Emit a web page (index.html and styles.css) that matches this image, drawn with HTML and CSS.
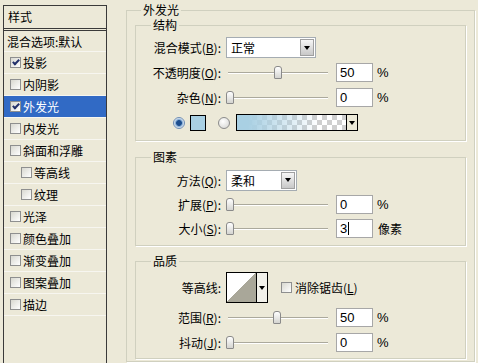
FILE: index.html
```html
<!DOCTYPE html>
<html>
<head>
  <meta charset="utf-8">
  <link rel="stylesheet" href="styles.css">
</head>
<body>

<div class="dialog">
  <!-- список стилей слева -->
  <div class="style-list">
    <div class="list-head">样式</div>
    <div class="list-row blend">混合选项:默认</div>
    <div class="list-row"><span class="check on"></span>投影</div>
    <div class="list-row"><span class="check"></span>内阴影</div>
    <div class="list-row selected"><span class="check on"></span>外发光</div>
    <div class="list-row"><span class="check"></span>内发光</div>
    <div class="list-row"><span class="check"></span>斜面和浮雕</div>
    <div class="list-row sub"><span class="check"></span>等高线</div>
    <div class="list-row sub"><span class="check"></span>纹理</div>
    <div class="list-row"><span class="check"></span>光泽</div>
    <div class="list-row"><span class="check"></span>颜色叠加</div>
    <div class="list-row"><span class="check"></span>渐变叠加</div>
    <div class="list-row"><span class="check"></span>图案叠加</div>
    <div class="list-row"><span class="check"></span>描边</div>
  </div>

  <!-- настройки внешнего свечения -->
  <fieldset class="group outer">
    <legend>外发光</legend>

    <fieldset class="group inner structure">
      <legend>结构</legend>
      <div class="row">
        <span class="lbl">混合模式(<u>B</u>):</span>
        <div class="select mode"><span>正常</span><i class="arrow-btn"></i></div>
      </div>
      <div class="row">
        <span class="lbl">不透明度(<u>O</u>):</span>
        <div class="slider"><span class="thumb" style="left:48px"></span></div>
        <div class="num">50</div><span class="unit">%</span>
      </div>
      <div class="row">
        <span class="lbl">杂色(<u>N</u>):</span>
        <div class="slider"><span class="thumb" style="left:0px"></span></div>
        <div class="num">0</div><span class="unit">%</span>
      </div>
      <div class="row color-row">
        <span class="radio on"></span>
        <span class="swatch"></span>
        <span class="radio second"></span>
        <div class="gradient"><span class="grad-fill"></span><span class="grad-arrow"></span></div>
      </div>
    </fieldset>

    <fieldset class="group inner elements">
      <legend>图素</legend>
      <div class="row">
        <span class="lbl">方法(<u>Q</u>):</span>
        <div class="select method"><span>柔和</span><i class="arrow-btn"></i></div>
      </div>
      <div class="row">
        <span class="lbl">扩展(<u>P</u>):</span>
        <div class="slider"><span class="thumb" style="left:0px"></span></div>
        <div class="num">0</div><span class="unit">%</span>
      </div>
      <div class="row">
        <span class="lbl">大小(<u>S</u>):</span>
        <div class="slider"><span class="thumb" style="left:0px"></span></div>
        <div class="num">3<span class="caret"></span></div><span class="unit cjk">像素</span>
      </div>
    </fieldset>

    <fieldset class="group inner quality">
      <legend>品质</legend>
      <div class="row tall">
        <span class="lbl">等高线:</span>
        <div class="contour"><span class="contour-img"></span><span class="contour-arrow"></span></div>
        <span class="check aa"></span><span>消除锯齿(<u>L</u>)</span>
      </div>
      <div class="row">
        <span class="lbl">范围(<u>R</u>):</span>
        <div class="slider"><span class="thumb" style="left:47px"></span></div>
        <div class="num">50</div><span class="unit">%</span>
      </div>
      <div class="row">
        <span class="lbl">抖动(<u>J</u>):</span>
        <div class="slider"><span class="thumb" style="left:0px"></span></div>
        <div class="num">0</div><span class="unit">%</span>
      </div>
    </fieldset>
  </fieldset>
</div>

</body>
</html>
```

FILE: styles.css
```css
/* Общие */
body {
  margin: 0;
  background: #ECE9D8;
  font: 12px "Noto Sans CJK SC", sans-serif;
  color: #000;
}
u {
  text-decoration: underline;
  text-underline-offset: 1px;
}
.dialog {
  display: flex;
  align-items: flex-start;
  height: 363px;
  overflow: hidden;
}

/* Список стилей */
.style-list {
  margin: 5px 0 0 3px;
  width: 104px;
  height: 370px;
  box-sizing: border-box;
  border: 1px solid #3a3a3a;
  border-bottom: none;
  flex: none;
}
.list-head {
  height: 22px;
  line-height: 22px;
  padding-left: 4px;
  border-bottom: 3px double #3a3a3a;
}
.list-row {
  height: 21px;
  display: flex;
  align-items: center;
  padding-left: 6px;
  border-bottom: 1px solid #F7F6F0;
  white-space: nowrap;
}
.list-row.blend {
  height: 20px;
  padding-left: 3px;
}
.list-row.sub {
  padding-left: 17px;
}
.list-row.selected {
  background: #316AC5;
  color: #fff;
}

/* Чекбокс */
.check {
  position: relative;
  width: 11px;
  height: 11px;
  box-sizing: border-box;
  border: 1px solid #8E8F8F;
  background: linear-gradient(135deg, #D8D8D0, #fff);
  margin-right: 2px;
  flex: none;
}
.check.on:after {
  content: "";
  position: absolute;
  left: 3px;
  top: 0;
  width: 2px;
  height: 5px;
  border: solid #22306A;
  border-width: 0 2px 2px 0;
  transform: rotate(45deg);
}
.check.aa {
  margin: 0 3px 0 13px;
}

/* Группы */
.group {
  margin: 0;
  padding: 0;
  min-width: 0;
  box-sizing: border-box;
  border: 1px solid #D0D0BF;
  box-shadow: 1px 1px 0 #fff;
}
.group legend {
  height: 14px;
  line-height: 14px;
  padding: 0 2px;
}
.outer {
  margin: 3px 0 0 19px;
  width: 349px;
  padding-bottom: 2px;
}
.outer > legend {
  margin-left: 14px;
}
.inner {
  margin: 0 8px;
}
.inner > legend {
  margin-left: 15px;
}
.structure {
  margin-top: 1px;
  padding: 3px 0 5px;
}
.elements {
  margin-top: 9px;
  padding: 4px 0 5px;
}
.quality {
  margin-top: 8px;
  padding: 2px 0 3px;
}

/* Строки */
.row {
  display: flex;
  align-items: center;
  height: 25px;
  white-space: nowrap;
}
.elements .row {
  height: 24px;
}
.row.tall {
  height: 35px;
}
.lbl {
  width: 85px;
  margin-right: 5px;
  text-align: right;
  flex: none;
}

/* Выпадающий список */
.select {
  display: flex;
  align-items: center;
  justify-content: space-between;
  height: 21px;
  box-sizing: border-box;
  border: 1px solid #A5ACB2;
  background: #fff;
  padding: 0 1px 0 4px;
}
.select.mode {
  width: 90px;
}
.select.method {
  width: 71px;
}
.arrow-btn {
  width: 14px;
  height: 17px;
  box-sizing: border-box;
  border: 1px solid #A0A0A0;
  background: linear-gradient(#F6F6F6, #C8C8C8);
  display: flex;
  align-items: center;
  justify-content: center;
}
.arrow-btn:after,
.grad-arrow:after,
.contour-arrow:after {
  content: "";
  border-left: 3px solid transparent;
  border-right: 3px solid transparent;
  border-top: 4px solid #000;
}

/* Ползунок */
.slider {
  position: relative;
  width: 104px;
  height: 13px;
  flex: none;
}
.slider:before {
  content: "";
  position: absolute;
  left: 2px;
  right: 2px;
  top: 6px;
  border-top: 1px solid #ABA99C;
  border-bottom: 1px solid #fff;
}
.thumb {
  position: absolute;
  top: 0;
  width: 6px;
  height: 11px;
  border: 1px solid #8A8A8A;
  border-radius: 3px 3px 1px 1px;
  background: linear-gradient(#fff, #D4D4D0);
}

/* Поля ввода */
.num {
  margin-left: 6px;
  width: 37px;
  height: 19px;
  box-sizing: border-box;
  border: 1px solid #A7A7A7;
  background: #fff;
  padding-left: 3px;
  font: 13px "Liberation Sans", sans-serif;
  line-height: 17px;
  display: flex;
  align-items: center;
}
.caret {
  display: inline-block;
  width: 1px;
  height: 13px;
  background: #000;
  margin-left: 1px;
}
.unit {
  margin-left: 4px;
  font: 13px "Liberation Sans", sans-serif;
}
.unit.cjk {
  font: 12px "Noto Sans CJK SC", sans-serif;
  margin-left: 5px;
}

/* Цвет / градиент */
.color-row {
  padding-left: 37px;
}
.radio {
  width: 12px;
  height: 12px;
  box-sizing: border-box;
  border-radius: 50%;
  border: 1px solid #8B8B8B;
  background: radial-gradient(circle at 40% 35%, #fff, #D2D2CE);
  flex: none;
}
.radio.on {
  border-color: #6E8DB4;
  background: radial-gradient(circle, #1D4E8E 0 2.5px, #78A3D0 3.2px, #E8EEF5 5px);
}
.radio.second {
  margin-left: 12px;
}
.swatch {
  margin-left: 5px;
  width: 16px;
  height: 16px;
  box-sizing: border-box;
  border: 1px solid #000;
  background: #A9D0E3;
}
.gradient {
  margin-left: 6px;
  width: 122px;
  height: 17px;
  box-sizing: border-box;
  border: 1px solid #000;
  display: flex;
}
.grad-fill {
  flex: 1;
  background:
    linear-gradient(to right, #A9D0E3 10%, rgba(169, 208, 227, 0) 75%),
    repeating-conic-gradient(#CFCFCF 0 25%, #fff 0 50%) 0 0 / 10px 10px;
}
.grad-arrow {
  width: 10px;
  border-left: 1px solid #000;
  background: #ECE9D8;
  display: flex;
  align-items: center;
  justify-content: center;
}

/* Контур */
.contour {
  display: flex;
  width: 42px;
  height: 31px;
  box-sizing: border-box;
  border: 1px solid #000;
}
.contour-img {
  width: 29px;
  background: linear-gradient(to bottom right, #fff 50%, #A9A799 50%);
}
.contour-arrow {
  flex: 1;
  border-left: 1px solid #000;
  background: #F2F1EA;
  display: flex;
  align-items: center;
  justify-content: center;
}
```
